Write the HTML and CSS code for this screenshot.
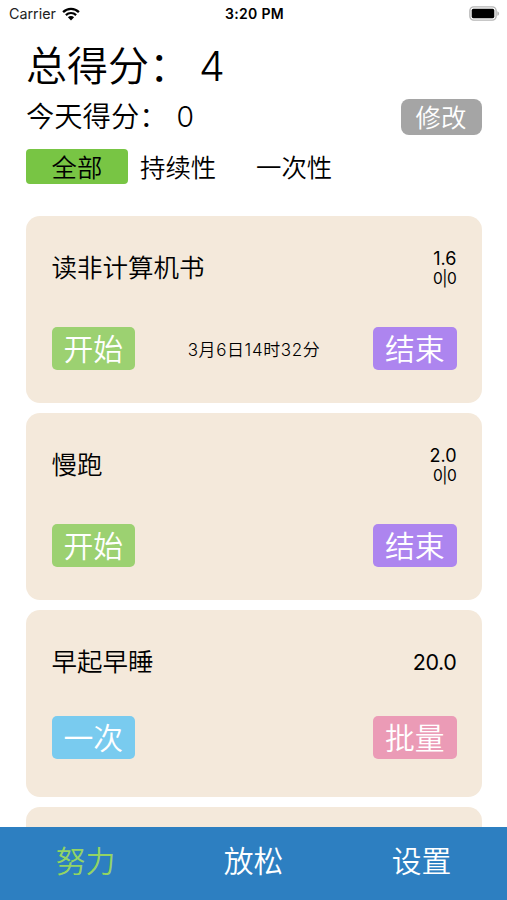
FILE: index.html
```
<!DOCTYPE html>
<html lang="zh-CN">
<head>
    <meta charset="UTF-8">
    <meta name="viewport" content="width=device-width, initial-scale=1.0">
    <title>努力</title>
    <link rel="stylesheet" href="styles.css">
</head>
<body>
    <div class="status-bar">
        <div class="carrier">
            <span>Carrier</span>
            <svg class="wifi" width="18" height="14" viewBox="0 0 18 14">
                <path d="M1.1 5.1a11.2 11.2 0 0 1 15.8 0" fill="none" stroke="#000" stroke-width="2.3"/>
                <path d="M3.9 8.1a7.2 7.2 0 0 1 10.2 0" fill="none" stroke="#000" stroke-width="2.2"/>
                <path d="M9 13.4L5.9 10.3a4.4 4.4 0 0 1 6.2 0z" fill="#000"/>
            </svg>
        </div>
        <div class="time">3:20 PM</div>
        <svg class="battery" width="31" height="15" viewBox="0 0 31 15">
            <rect x="0.9" y="0.9" width="26.2" height="13.2" rx="3.8" fill="#fff" stroke="#b5b5b5" stroke-width="1.4"/>
            <rect x="2.7" y="2.8" width="22.6" height="9.4" rx="1.6" fill="#000"/>
            <path d="M28.3 5.2c2.4.8 2.4 3.8 0 4.6z" fill="#b5b5b5"/>
        </svg>
    </div>

    <div class="header">
        <div class="total">总得分：<span>4</span></div>
        <div class="today">
            <div class="today-score">今天得分：<span>0</span></div>
            <button class="edit">修改</button>
        </div>
        <div class="tabs">
            <div class="tab active">全部</div>
            <div class="tab">持续性</div>
            <div class="tab">一次性</div>
        </div>
    </div>

    <div class="list">
        <div class="card">
            <div class="card-head">
                <div class="name">读非计算机书</div>
                <div class="score">1.6<small>0|0</small></div>
            </div>
            <div class="card-actions">
                <button class="btn start">开始</button>
                <span class="date">3月6日14时32分</span>
                <button class="btn end">结束</button>
            </div>
        </div>
        <div class="card">
            <div class="card-head">
                <div class="name">慢跑</div>
                <div class="score">2.0<small>0|0</small></div>
            </div>
            <div class="card-actions">
                <button class="btn start">开始</button>
                <button class="btn end">结束</button>
            </div>
        </div>
        <div class="card single">
            <div class="card-head">
                <div class="name">早起早睡</div>
                <div class="score">20.0</div>
            </div>
            <div class="card-actions">
                <button class="btn once">一次</button>
                <button class="btn batch">批量</button>
            </div>
        </div>
        <div class="card"></div>
    </div>

    <div class="nav">
        <div class="nav-item active">努力</div>
        <div class="nav-item">放松</div>
        <div class="nav-item">设置</div>
    </div>
</body>
</html>
```
FILE: styles.css
```
* {
    box-sizing: border-box;
}
body {
    margin: 0;
    height: 900px;
    display: flex;
    flex-direction: column;
    overflow: hidden;
    background-color: #fff;
    color: #000;
    font-family: Inter, "Noto Sans CJK SC", sans-serif;
    font-weight: 350;
}
button {
    border: none;
    padding: 0;
    font-family: inherit;
    font-weight: inherit;
    color: white;
}
.status-bar {
    display: grid;
    grid-template-columns: 1fr auto 1fr;
    align-items: center;
    height: 27px;
    padding: 0 7px 0 9px;
    font-size: 14.3px;
    flex-shrink: 0;
}
.carrier {
    display: flex;
    align-items: center;
    gap: 6px;
    color: #222;
    font-weight: 400;
}
.time {
    font-weight: 600;
    font-size: 14px;
    letter-spacing: 0.3px;
}
.battery {
    justify-self: end;
}
.header {
    flex-shrink: 0;
    height: 188.5px;
    padding: 0 25.5px 0 26px;
}
.total {
    height: 70px;
    line-height: 78px;
    font-size: 41px;
}
.total span {
    margin-left: 9px;
}
.today {
    display: flex;
    justify-content: space-between;
    align-items: center;
    height: 40px;
    font-size: 28.3px;
}
.today-score {
    line-height: 38px;
    padding-bottom: 1px;
}
.today span {
    margin-left: 9px;
}
.edit {
    width: 81px;
    height: 36px;
    border-radius: 8px;
    background-color: #a5a5a5;
    font-size: 25.4px;
    line-height: 38px;
}
.tabs {
    display: flex;
    gap: 12px;
    margin-top: 12px;
}
.tab {
    width: 104px;
    height: 35px;
    line-height: 37px;
    font-size: 25.4px;
}
.tab.active {
    width: 102px;
    border-radius: 4px;
    background-color: #78c544;
    text-align: center;
}
.list {
    flex: 1;
    min-height: 0;
    overflow: hidden;
    padding: 0 25.5px 0 26px;
}
.card {
    height: 187px;
    margin-bottom: 10px;
    padding: 26px 25px 0 25.5px;
    border-radius: 14px;
    background-color: #f4e9db;
}
.card-head {
    display: flex;
    justify-content: space-between;
    align-items: center;
    height: 52px;
}
.name {
    font-size: 25.5px;
    line-height: 54px;
}
.score {
    padding-top: 2px;
    font-size: 18px;
    line-height: 21px;
    font-weight: 400;
    text-align: right;
}
.score small {
    display: block;
    font-size: 15.5px;
    line-height: 20px;
    letter-spacing: -0.4px;
}
.single .score {
    font-size: 21.5px;
    letter-spacing: -0.4px;
}
.card-actions {
    display: flex;
    justify-content: space-between;
    align-items: center;
    margin-top: 33.5px;
}
.single .card-actions {
    margin-top: 28.5px;
}
.date {
    font-size: 17px;
    line-height: 20px;
    letter-spacing: 0.6px;
    padding-top: 2px;
}
.btn {
    width: 83.5px;
    height: 43px;
    border-radius: 5px;
    font-size: 29.8px;
    line-height: 45px;
}
.start {
    background-color: #9cd171;
}
.end {
    background-color: #ad85ef;
}
.once {
    background-color: #79cbef;
}
.batch {
    background-color: #eb9bb6;
}
.nav {
    display: flex;
    flex-shrink: 0;
    height: 73px;
    padding: 0 1.5px;
    background-color: #2d7fc1;
    color: white;
    font-size: 29.8px;
}
.nav-item {
    flex: 1;
    line-height: 68px;
    text-align: center;
}
.nav-item.active {
    color: #93d464;
}
```
